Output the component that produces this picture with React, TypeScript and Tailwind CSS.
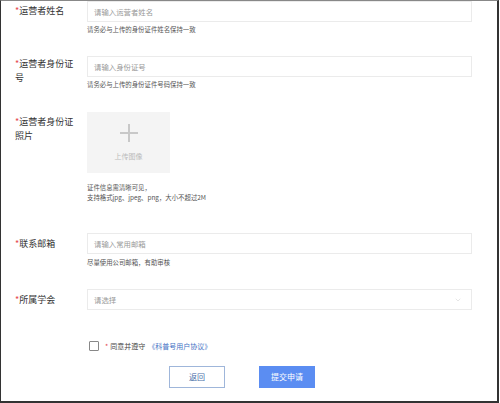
import { ChevronDown } from 'lucide-react';

const font = { fontFamily: '"Noto Sans CJK SC", "Noto Sans", sans-serif' };

function Label({ text }: { text: string }) {
  return (
    <div className="w-[62px] ml-[14px] mr-[10px] shrink-0 text-[9px] leading-[14px] text-[#333] before:content-['*'] before:text-[#e5484d]">
      {text}
    </div>
  );
}

function Hint({ children }: { children: React.ReactNode }) {
  return <div className="text-[6.4px] leading-[8px] text-[#555]">{children}</div>;
}

function TextInput({ placeholder }: { placeholder: string }) {
  return (
    <div className="w-[385px] h-[21px] border border-[#ebebeb] flex items-center px-[6px] text-[7.4px] text-[#999]">
      {placeholder}
    </div>
  );
}

export default function App() {
  return (
    <div
      className="w-[499px] h-[403px] bg-white border-l border-l-[#333] border-t border-t-[#888] border-r-2 border-r-[#333] border-b-2 border-b-[#333] overflow-hidden"
      style={font}
    >
      {/* 姓名 */}
      <div className="flex">
        <div className="pt-[3px]">
          <Label text="运营者姓名" />
        </div>
        <div className="flex flex-col gap-[4px]">
          <TextInput placeholder="请输入运营者姓名" />
          <Hint>请务必与上传的身份证件姓名保持一致</Hint>
        </div>
      </div>

      {/* 身份证号 */}
      <div className="flex mt-[22px]">
        <div className="pt-[1px]">
          <Label text="运营者身份证号" />
        </div>
        <div className="flex flex-col gap-[4px]">
          <TextInput placeholder="请输入身份证号" />
          <Hint>请务必与上传的身份证件号码保持一致</Hint>
        </div>
      </div>

      {/* 身份证照片 */}
      <div className="flex mt-[23px]">
        <div className="pt-[3px]">
          <Label text="运营者身份证照片" />
        </div>
        <div className="flex flex-col">
          <div className="w-[83px] h-[61px] bg-[#f4f4f4] flex flex-col items-center">
            <div className="relative w-[18px] h-[18px] mt-[12px]">
              <div className="absolute left-0 right-0 top-[8px] h-[2px] bg-[#c8c8c8]" />
              <div className="absolute top-0 bottom-0 left-[8px] w-[2px] bg-[#c8c8c8]" />
            </div>
            <div className="mt-[10px] text-[7px] leading-[9px] text-[#bbb]">上传图像</div>
          </div>
          <div className="mt-[10px] text-[6.4px] leading-[10px] text-[#555]">
            <div>证件信息需清晰可见，</div>
            <div>支持格式jpg、jpeg、png，大小不超过2M</div>
          </div>
        </div>
      </div>

      {/* 邮箱 */}
      <div className="flex mt-[30px]">
        <div className="pt-[4px]">
          <Label text="联系邮箱" />
        </div>
        <div className="flex flex-col gap-[5px]">
          <TextInput placeholder="请输入常用邮箱" />
          <Hint>尽量使用公司邮箱，有助审核</Hint>
        </div>
      </div>

      {/* 学会 */}
      <div className="flex mt-[22px]">
        <div className="pt-[4px]">
          <Label text="所属学会" />
        </div>
        <div className="w-[385px] h-[21px] border border-[#ebebeb] flex items-center justify-between px-[6px] text-[7.4px] text-[#999]">
          <span>请选择</span>
          <ChevronDown className="w-[8px] h-[8px] text-[#ccc] mr-[3px]" strokeWidth={1.5} />
        </div>
      </div>

      {/* 协议 */}
      <div className="flex items-center mt-[31px] ml-[88px]">
        <div className="w-[10px] h-[10px] border border-[#888] rounded-[1px]" />
        <span className="ml-[6px] text-[7px] text-[#e5484d]">*</span>
        <span className="ml-[2px] text-[7px] text-[#444]">同意并遵守</span>
        <span className="ml-[3px] text-[7px] text-[#3f6fc4]">《科普号用户协议》</span>
      </div>

      {/* 按钮 */}
      <div className="flex mt-[14px] ml-[168px] gap-[34px]">
        <button className="w-[56px] h-[22px] border border-[#9fb6da] text-[8px] text-[#4a6ea8] bg-white">
          返回
        </button>
        <button className="w-[56px] h-[22px] bg-[#5b8df2] text-[8px] text-white">
          提交申请
        </button>
      </div>
    </div>
  );
}
